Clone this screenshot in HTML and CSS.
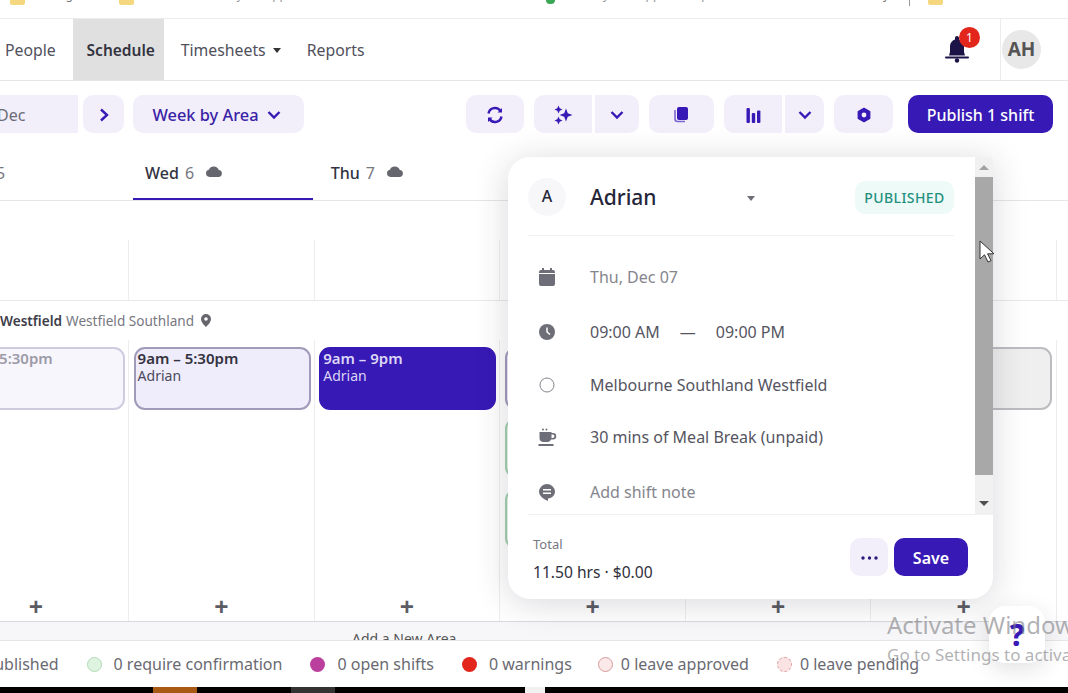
FILE: index.html
```html
<!DOCTYPE html>
<html>

<head>
    <meta charset="UTF-8">
    <title>Schedule</title>
    <link rel="stylesheet" href="styles.css">
</head>

<body>
    <div id="page">

        <div id="bookmarks">
            <span class="folder"></span><span class="mark mark-a">Settings</span>
            <span class="folder"></span><span class="mark mark-b">Get Started with your apps</span>
            <span class="mark-dot"></span><span class="mark mark-c">Monday.com apps to help</span>
            <span class="mark mark-d">y</span>
            <span class="mark-sep"></span>
            <span class="folder"></span><span class="mark">Resources</span>
        </div>

        <div id="nav">
            <a class="nav-item nav-people">People</a>
            <a class="nav-item active">Schedule</a>
            <a class="nav-item">Timesheets <i class="caret"></i></a>
            <a class="nav-item">Reports</a>
            <div class="nav-right">
                <div class="bell">
                    <svg width="26" height="28" viewBox="0 0 26 28">
                        <path d="M13 1c-1.200 0-2 .8-2 2v1.600C7.800 5.600 6 8.300 6 11.500V17l-1 3.500h16L20 17v-5.500c0-3.200-1.800-5.900-5-6.900V3c0-1.200-.8-2-2-2z" fill="#1c1447"/>
                        <rect x="1" y="21.500" width="24" height="2" rx="1" fill="#1c1447"/>
                        <circle cx="13" cy="25.500" r="2.200" fill="#1c1447"/>
                    </svg>
                    <span class="badge">1</span>
                </div>
                <div class="user-cell"><span class="avatar">AH</span></div>
            </div>
        </div>

        <div id="toolbar">
            <div class="tool-group">
                <button class="btn btn-date">Dec</button>
                <button class="btn btn-next">
                    <svg width="12" height="14" viewBox="0 0 12 14"><path d="M3 1.500 9 7l-6 5.500" class="ico-line"/></svg>
                </button>
                <button class="btn btn-view">Week by Area
                    <svg width="14" height="10" viewBox="0 0 14 10"><path d="M1.500 2 7 7.500 12.500 2" class="ico-line"/></svg>
                </button>
            </div>
            <div class="tool-group tool-right">
                <button class="btn btn-icon w58">
                    <svg width="18" height="20" viewBox="0 0 18 20">
                        <path d="M2.500 8.500a6.600 6.600 0 0 1 12-2.500M15.500 11.500a6.600 6.600 0 0 1-12 2.500" class="ico-line"/>
                        <path d="M16 3v4.500h-4.500zM2 17v-4.500h4.500z" fill="#3719b5"/>
                    </svg>
                </button>
                <div class="split">
                    <button class="btn btn-icon w58 left">
                        <svg width="20" height="20" viewBox="0 0 20 20" fill="#3719b5">
                            <path d="M13 3.500l1.800 4.700 4.700 1.800-4.700 1.800-1.800 4.700-1.800-4.700L6.500 10l4.700-1.800z"/>
                            <path d="M5.500 .5l1.200 2.800 2.800 1.200-2.800 1.200-1.200 2.800-1.200-2.800L1.500 4.500l2.800-1.200z"/>
                            <path d="M5.500 11.500l1.200 2.800 2.800 1.200-2.800 1.200-1.200 2.800-1.200-2.800-2.800-1.200 2.800-1.200z"/>
                        </svg>
                    </button>
                    <button class="btn btn-icon w44 right">
                        <svg width="14" height="10" viewBox="0 0 14 10"><path d="M1.500 2 7 7.500 12.500 2" class="ico-line"/></svg>
                    </button>
                </div>
                <button class="btn btn-icon w65">
                    <svg width="15" height="17" viewBox="0 0 15 17" fill="#3719b5">
                        <rect x="3" y="1" width="11" height="13" rx="2"/>
                        <path d="M1 4v9c0 1.500 1 2.500 2.500 2.500H11" fill="none" stroke="#7a66cf" stroke-width="1.600"/>
                    </svg>
                </button>
                <div class="split">
                    <button class="btn btn-icon w58 left">
                        <svg width="15" height="16" viewBox="0 0 15 16" fill="#3719b5">
                            <rect x="0.500" y="1" width="3.400" height="15" rx="1"/>
                            <rect x="5.800" y="6" width="3.400" height="10" rx="1"/>
                            <rect x="11" y="3.500" width="3.400" height="12.500" rx="1"/>
                        </svg>
                    </button>
                    <button class="btn btn-icon w39 right">
                        <svg width="14" height="10" viewBox="0 0 14 10"><path d="M1.500 2 7 7.500 12.500 2" class="ico-line"/></svg>
                    </button>
                </div>
                <button class="btn btn-icon w59">
                    <svg width="16" height="16" viewBox="0 0 16 16">
                        <path d="M8 1.500 13.600 4.700v6.600L8 14.500 2.400 11.300V4.700z" fill="#3719b5" stroke="#3719b5" stroke-width="1.600" stroke-linejoin="round"/>
                        <circle cx="8" cy="8" r="2.400" fill="#f2effb"/>
                    </svg>
                </button>
                <button class="btn btn-publish">Publish 1 shift</button>
            </div>
        </div>

        <div id="board">
            <div class="days">
                <div class="day"><span class="day-tab first-tab">Tue <em>5</em></span></div>
                <div class="day"><span class="day-tab current">Wed <em>6</em>
                    <svg class="cloud" width="18" height="11" viewBox="0 0 18 11"><path d="M4.500 11a3.700 3.700 0 0 1-.6-7.300A5.300 5.300 0 0 1 13.800 3.900 3.600 3.600 0 0 1 14 11z"/></svg>
                </span></div>
                <div class="day"><span class="day-tab">Thu <em>7</em>
                    <svg class="cloud" width="18" height="11" viewBox="0 0 18 11"><path d="M4.500 11a3.700 3.700 0 0 1-.6-7.300A5.300 5.300 0 0 1 13.800 3.900 3.600 3.600 0 0 1 14 11z"/></svg>
                </span></div>
                <div class="day"></div>
                <div class="day"></div>
                <div class="day"></div>
            </div>

            <div class="open-row">
                <div class="open-cell"></div>
                <div class="open-cell"></div>
                <div class="open-cell"></div>
                <div class="open-cell"></div>
                <div class="open-cell"></div>
                <div class="open-cell"></div>
            </div>

            <div class="area-title">
                <b>Westfield</b> <span>Westfield Southland</span>
                <svg width="10" height="13" viewBox="0 0 10 13"><path d="M5 0a5 5 0 0 1 5 5c0 3-3 6-5 8-2-2-5-5-5-8a5 5 0 0 1 5-5zm0 3.200a1.800 1.800 0 1 0 0 3.600 1.800 1.800 0 0 0 0-3.600z" fill="#66666c" fill-rule="evenodd"/></svg>
            </div>

            <div class="shift-row">
                <div class="col">
                    <div class="shift shift-faded"><b>9am – 5:30pm</b>Adrian</div>
                    <span class="plus">+</span>
                </div>
                <div class="col">
                    <div class="shift shift-light"><b>9am – 5:30pm</b>Adrian</div>
                    <span class="plus">+</span>
                </div>
                <div class="col">
                    <div class="shift shift-solid"><b>9am – 9pm</b>Adrian</div>
                    <span class="plus">+</span>
                </div>
                <div class="col">
                    <div class="shift shift-light"></div>
                    <div class="shift shift-green"></div>
                    <div class="shift shift-green shift-lower"></div>
                    <span class="plus">+</span>
                </div>
                <div class="col">
                    <span class="plus">+</span>
                </div>
                <div class="col">
                    <div class="shift shift-grey"></div>
                    <span class="plus">+</span>
                </div>
            </div>

            <div class="add-area"><span>Add a New Area</span></div>
        </div>

        <div id="legend">
            <span class="legend-item">0 published</span>
            <span class="legend-item"><i class="dot dot-confirm"></i>0 require confirmation</span>
            <span class="legend-item"><i class="dot dot-open"></i>0 open shifts</span>
            <span class="legend-item warn-item"><i class="dot dot-warn"></i>0 warnings</span>
            <span class="legend-item tight"><i class="dot dot-approved"></i>0 leave approved</span>
            <span class="legend-item tight"><i class="dot dot-pending"></i>0 leave pending</span>
        </div>

        <div id="taskbar">
            <span class="task task-orange"></span>
            <span class="task task-grey"></span>
            <span class="task-gap"></span>
        </div>

        <div id="popup">
            <div class="popup-main">
                <div class="popup-body">
                    <div class="popup-head">
                        <span class="letter">A</span>
                        <span class="person">Adrian <i class="caret caret-grey"></i></span>
                        <span class="status">PUBLISHED</span>
                    </div>
                    <div class="detail detail-first muted">
                        <svg width="16" height="18" viewBox="0 0 16 18" fill="#6e6e78"><path d="M3 0h2v2h6V0h2v2h1a2 2 0 0 1 2 2v12a2 2 0 0 1-2 2H2a2 2 0 0 1-2-2V4a2 2 0 0 1 2-2h1z"/><rect x="0" y="5" width="16" height="1" fill="#fff"/></svg>
                        <span>Thu, Dec 07</span>
                    </div>
                    <div class="detail detail-tall">
                        <svg width="16" height="16" viewBox="0 0 16 16"><circle cx="8" cy="8" r="8" fill="#6e6e78"/><path d="M8 3.500V8l3 2.500" fill="none" stroke="#fff" stroke-width="1.500"/></svg>
                        <span>09:00 AM</span><span class="dash">—</span><span>09:00 PM</span>
                    </div>
                    <div class="detail detail-short">
                        <svg width="16" height="16" viewBox="0 0 16 16"><circle cx="8" cy="8" r="7" fill="#fff" stroke="#85858d" stroke-width="1"/></svg>
                        <span>Melbourne Southland Westfield</span>
                    </div>
                    <div class="detail">
                        <svg width="17" height="19" viewBox="0 0 17 19" fill="#6e6e78"><circle cx="4.500" cy="1.500" r="1"/><circle cx="8" cy="1.500" r="1"/><path d="M1 4h12v1h1.500a2.500 2.500 0 0 1 0 6.500H12.500A4 4 0 0 1 9.500 14h-5A4 4 0 0 1 1 10zm12 2.500v3.500h1.200a1.750 1.750 0 0 0 0-3.500z"/><rect x="0" y="16" width="15" height="2"/></svg>
                        <span>30 mins of Meal Break (unpaid)</span>
                    </div>
                    <div class="detail detail-tall muted">
                        <svg width="16" height="17" viewBox="0 0 16 17"><path d="M8 0a8 8 0 0 1 8 7.500c0 4-3.500 7-7 7v2.500C5 15.500 0 12 0 7.500A8 8 0 0 1 8 0z" fill="#6e6e78"/><rect x="4" y="5" width="8" height="1.500" fill="#fff"/><rect x="4" y="8.500" width="8" height="1.500" fill="#fff"/></svg>
                        <span>Add shift note</span>
                    </div>
                </div>
                <div class="scrollbar">
                    <span class="arrow-up"></span>
                    <div class="thumb"></div>
                    <span class="arrow-down"></span>
                </div>
            </div>
            <div class="popup-foot">
                <div class="total">
                    <small>Total</small>
                    <span>11.50 hrs · $0.00</span>
                </div>
                <button class="btn btn-more">
                    <svg width="17" height="4" viewBox="0 0 17 4" fill="#2c1a7a"><circle cx="2" cy="2" r="1.700"/><circle cx="8.500" cy="2" r="1.700"/><circle cx="15" cy="2" r="1.700"/></svg>
                </button>
                <button class="btn btn-save">Save</button>
            </div>
        </div>

        <svg id="pointer" width="16" height="24" viewBox="0 0 16 24">
            <path d="M1 1v18l4.500-4.200L9 22l3-1.400-3.400-6.800H15z" fill="#fff" stroke="#333" stroke-width="1"/>
        </svg>

        <div id="help">?</div>

        <div id="watermark">
            <p class="wm-big">Activate Windows</p>
            <p class="wm-small">Go to Settings to activate Windows.</p>
        </div>

    </div>
</body>

</html>
```
FILE: styles.css
```css
* {
    margin: 0;
    padding: 0;
    box-sizing: border-box;
}

body {
    font-family: "Noto Sans", "Liberation Sans", sans-serif;
    background: #fff;
    color: #4b4b57;
}

#page {
    position: relative;
    width: 1068px;
    height: 693px;
    overflow: hidden;
    background: #fff;
}

/* bookmarks strip, only the bottom of it is still visible */
#bookmarks {
    height: 19px;
    border-bottom: 1px solid #ececec;
    display: flex;
    align-items: flex-start;
    padding-left: 10px;
    overflow: hidden;
    font-size: 12px;
    color: #777;
}

.folder {
    width: 15px;
    height: 5px;
    background: #f5d77f;
    border-radius: 0 0 2px 2px;
    flex: none;
}

.mark {
    margin-top: -14px;
    margin-left: 8px;
    white-space: nowrap;
}

.mark-a {
    width: 86px;
}

.mark-b {
    width: 404px;
    color: #999;
}

.mark-c {
    width: 312px;
    color: #999;
}

.mark-d {
    width: 26px;
}

.mark-dot {
    width: 9px;
    height: 4px;
    background: #3aa757;
    border-radius: 0 0 5px 5px;
    flex: none;
}

.mark-sep {
    width: 1px;
    height: 6px;
    background: #999;
    margin-right: 18px;
}

#nav {
    height: 62px;
    border-bottom: 1px solid #e6e6e6;
    display: flex;
    align-items: stretch;
    font-size: 15.8px;
}

.nav-item {
    display: flex;
    align-items: center;
    padding: 0 13px;
    white-space: nowrap;
    color: #50505c;
}

.nav-people {
    padding: 0 17px 0 5px;
}

.nav-item.active {
    background: #e0e0e0;
    color: #33333f;
    font-size: 15.5px;
    font-weight: 600;
    padding: 0 0 0 5px;
    width: 91px;
    justify-content: center;
    margin-right: 4px;
}

.caret {
    display: inline-block;
    margin-left: 7px;
    border-top: 5px solid #333;
    border-left: 4.500px solid transparent;
    border-right: 4.500px solid transparent;
    margin-top: 2px;
}

.nav-right {
    margin-left: auto;
    display: flex;
    align-items: center;
}

.bell {
    position: relative;
    width: 26px;
    height: 28px;
    margin-top: -1px;
    margin-right: 1px;
}

.badge {
    position: absolute;
    left: 15px;
    top: -8px;
    width: 21px;
    height: 21px;
    border-radius: 50%;
    background: #e3261b;
    color: #fff;
    font-size: 12px;
    line-height: 21px;
    text-align: center;
}

.user-cell {
    height: 100%;
    border-left: 1px solid #ececec;
    margin-left: 29px;
    padding-left: 1px;
    width: 68px;
    display: flex;
    align-items: center;
}

.avatar {
    width: 39px;
    height: 39px;
    border-radius: 50%;
    background: #e8e8e8;
    color: #555;
    font-size: 19px;
    font-weight: 700;
    line-height: 39px;
    text-align: center;
}

#toolbar {
    height: 64px;
    padding: 14px 15px 0 0;
    display: flex;
    justify-content: space-between;
    align-items: flex-start;
}

.tool-group {
    display: flex;
    gap: 9px;
}

.tool-right {
    gap: 10px;
}

.btn {
    height: 38px;
    border: 0;
    border-radius: 10px;
    background: #f2effb;
    color: #3a22a6;
    font-family: inherit;
    font-size: 16px;
    font-weight: 500;
    padding-top: 1px;
    display: flex;
    align-items: center;
    justify-content: center;
}

.ico-line {
    fill: none;
    stroke: #3719b5;
    stroke-width: 2.400;
}

.btn-date {
    width: 78px;
    justify-content: flex-start;
    margin-right: -4px;
    border-radius: 0;
    color: #6c6c78;
    font-weight: 400;
    text-indent: -3px;
}

.btn-next {
    width: 41px;
}

.btn-view {
    width: 171px;
    gap: 8px;
    padding-right: 4px;
    font-size: 16.4px;
}

.split {
    display: flex;
    gap: 3px;
}

.left {
    border-radius: 10px 0 0 10px;
}

.right {
    border-radius: 0 10px 10px 0;
}

.w58 {
    width: 58px;
}

.w44 {
    width: 44px;
}

.w39 {
    width: 39px;
}

.w65 {
    width: 65px;
}

.w59 {
    width: 59px;
}

.btn-publish {
    width: 145px;
    margin-left: 5px;
    background: #3719b5;
    color: #fff;
}

/* week grid */
#board {
    margin-left: -56.5px;
    width: 1124.5px;
    height: 495px;
    background: #fff;
}

.days,
.open-row,
.shift-row {
    display: grid;
    grid-template-columns: repeat(6, 185.6px);
}

.days {
    height: 56px;
    border-bottom: 1px solid #e6e6e6;
    width: 100%;
}

.day-tab {
    display: flex;
    align-items: center;
    gap: 6px;
    height: 55px;
    margin: 0 2px 0 4px;
    padding-left: 12px;
    padding-top: 2px;
    font-size: 16px;
    font-weight: 500;
    color: #33333f;
    border-bottom: 2px solid transparent;
}

.first-tab {
    padding-left: 15px;
}

.day-tab em {
    font-style: normal;
    font-weight: 400;
    color: #77777f;
}

.day-tab.current {
    border-bottom-color: #3719b5;
}

.cloud {
    fill: #66666e;
    margin-left: 5px;
    margin-top: -3px;
}

.open-row {
    height: 100px;
    padding-top: 39px;
    border-bottom: 1px solid #e9e9e9;
    width: 100%;
}

.open-cell {
    border-right: 1px solid #ededed;
}

.area-title {
    height: 39px;
    padding-left: 56.5px;
    display: flex;
    align-items: center;
    gap: 4px;
    font-size: 13.6px;
    color: #77777f;
}

.area-title b {
    color: #3d3d49;
    font-weight: 600;
}

.area-title svg {
    margin-left: 3px;
}

.shift-row {
    height: 282px;
    border-bottom: 1px solid #d9d9dd;
    width: 100%;
}

.col {
    position: relative;
    border-right: 1px solid #ededed;
    padding: 7px 3px 0 4.5px;
    display: flex;
    flex-direction: column;
    gap: 8px;
}

.shift {
    height: 63px;
    border-radius: 11px;
    border: 2px solid #a29ab9;
    padding: 0 2px;
    font-size: 14px;
    line-height: 16px;
    flex: none;
}

.shift b {
    display: block;
    font-size: 15px;
    line-height: 19px;
    font-weight: 600;
}

.shift-faded {
    background: #f8f6fd;
    border-color: #d0cbdf;
    color: #9d9aa8;
}

.shift-light {
    background: #efecfb;
    color: #4a4a5c;
}

.shift-light b {
    color: #33333f;
}

.shift-solid {
    background: #3719b5;
    border-color: #3719b5;
    color: #dcd6f6;
}

.shift-green {
    height: 60px;
    background: #edf7ef;
    border-color: #a3cfae;
}

.shift-lower {
    margin-top: 3px;
}

.shift-grey {
    background: #efefef;
    border-color: #bdbdc1;
    margin-right: 1px;
}

.plus {
    position: absolute;
    left: 0;
    right: 0;
    bottom: 2px;
    text-align: center;
    font-size: 25px;
    line-height: 25px;
    font-weight: 700;
    color: #5c5c64;
}

.add-area {
    height: 18px;
    padding-left: 408.5px;
    background: #f7f7f9;
    font-size: 14px;
    line-height: 34px;
    color: #555;
    overflow: hidden;
    white-space: nowrap;
}

#legend {
    height: 47px;
    border-top: 1px solid #e6e6e6;
    background: #fff;
    display: flex;
    align-items: center;
    gap: 28px;
    margin-left: -29px;
    width: 1097px;
    font-size: 16px;
    color: #6a6a72;
    white-space: nowrap;
}

.legend-item {
    display: flex;
    align-items: center;
    gap: 12px;
}

.legend-item.tight {
    gap: 8px;
}

.warn-item {
    margin-right: -2px;
}

.dot {
    width: 15px;
    height: 15px;
    border-radius: 50%;
    flex: none;
}

.dot-confirm {
    background: #dff3e1;
    border: 1.500px solid #b2d9b6;
}

.dot-open {
    background: #bb3f9c;
}

.dot-warn {
    background: #e3261b;
}

.dot-approved {
    background: #fbe8e8;
    border: 1.500px solid #d99c9c;
}

.dot-pending {
    background: #fbe3e3;
    border: 1px dashed #d9a0a0;
}

#taskbar {
    height: 6px;
    background: #000;
    display: flex;
}

.task {
    width: 44px;
    height: 6px;
}

.task-orange {
    margin-left: 153px;
    background: #a85a14;
}

.task-grey {
    margin-left: 94px;
    background: #333;
}

.task-gap {
    margin-left: 190px;
    width: 20px;
    background: #f1f1f1;
}

/* shift editor */
#popup {
    position: absolute;
    left: 508px;
    top: 157px;
    width: 485px;
    height: 442px;
    background: #fff;
    border-radius: 22px 4px 22px 22px;
    box-shadow: 0 4px 34px rgba(40, 40, 60, 0.18);
    overflow: hidden;
    display: flex;
    flex-direction: column;
}

.popup-main {
    height: 358px;
    display: flex;
    flex: none;
}

.popup-body {
    width: 467px;
    padding: 0 21px 0 20px;
    overflow: hidden;
}

.popup-head {
    display: flex;
    align-items: center;
    height: 79px;
    padding-top: 2px;
    border-bottom: 1px solid #f1f1f3;
}

.letter {
    width: 38px;
    height: 38px;
    border-radius: 50%;
    background: #f7f7f9;
    color: #26263a;
    font-size: 16px;
    line-height: 36px;
    font-weight: 500;
    text-align: center;
    flex: none;
}

.person {
    width: 165px;
    margin-left: 24px;
    display: flex;
    align-items: center;
    justify-content: space-between;
    font-size: 21px;
    font-weight: 500;
    color: #26263a;
}

.caret-grey {
    border-top-color: #6e6e78;
    border-left-width: 4px;
    border-right-width: 4px;
}

.status {
    margin-left: auto;
    width: 99px;
    height: 33px;
    border-radius: 10px;
    background: #eefaf8;
    color: #23907f;
    font-size: 14px;
    line-height: 33px;
    font-weight: 500;
    letter-spacing: 0.4px;
    text-align: center;
}

.detail {
    display: flex;
    align-items: center;
    height: 54px;
    font-size: 16px;
    color: #55555f;
    white-space: nowrap;
}

.detail svg {
    width: 20px;
    margin: 0 33px 0 9px;
    flex: none;
}

.detail-first {
    margin-top: 14px;
}

.detail-tall {
    height: 56px;
}

.detail-short {
    height: 50px;
}

.muted {
    color: #85858d;
}

.dash {
    margin: 0 20px;
}

.scrollbar {
    position: relative;
    width: 18px;
    padding-top: 20px;
    background: #f1f1f1;
}

.thumb {
    height: 298px;
    background: #a8a8a8;
}

.arrow-up,
.arrow-down {
    position: absolute;
    left: 4px;
    border-left: 5px solid transparent;
    border-right: 5px solid transparent;
}

.arrow-up {
    top: 8px;
    border-bottom: 5px solid #a3a3a3;
}

.arrow-down {
    bottom: 9px;
    border-top: 5px solid #505050;
}

.popup-foot {
    flex: 1;
    margin: -1px 18px 0 20px;
    border-top: 1px solid #efeff1;
    padding: 23px 7px 0 5px;
    display: flex;
    align-items: flex-start;
    gap: 6px;
}

.total {
    margin: -3px auto 0 0;
    display: flex;
    flex-direction: column;
    font-size: 15.6px;
    color: #30303c;
}

.total small {
    font-size: 13px;
    color: #77777f;
    margin-bottom: 8px;
}

.btn-more {
    width: 38px;
}

.btn-save {
    width: 74px;
    background: #3719b5;
    color: #fff;
    font-weight: 600;
}

#pointer {
    position: absolute;
    left: 979px;
    top: 240px;
}

#help {
    position: absolute;
    left: 989px;
    top: 606px;
    width: 56px;
    height: 57px;
    border-radius: 16px;
    background: #fff;
    box-shadow: 0 6px 22px rgba(40, 40, 60, 0.14);
    color: #3719b5;
    font-size: 30px;
    font-weight: 800;
    line-height: 57px;
    text-align: center;
}

#watermark {
    position: absolute;
    left: 887px;
    top: 609px;
    white-space: nowrap;
    color: rgba(125, 125, 130, 0.6);
}

.wm-big {
    font-size: 24px;
    line-height: 32px;
}

.wm-small {
    font-size: 17px;
    line-height: 28px;
}
```
